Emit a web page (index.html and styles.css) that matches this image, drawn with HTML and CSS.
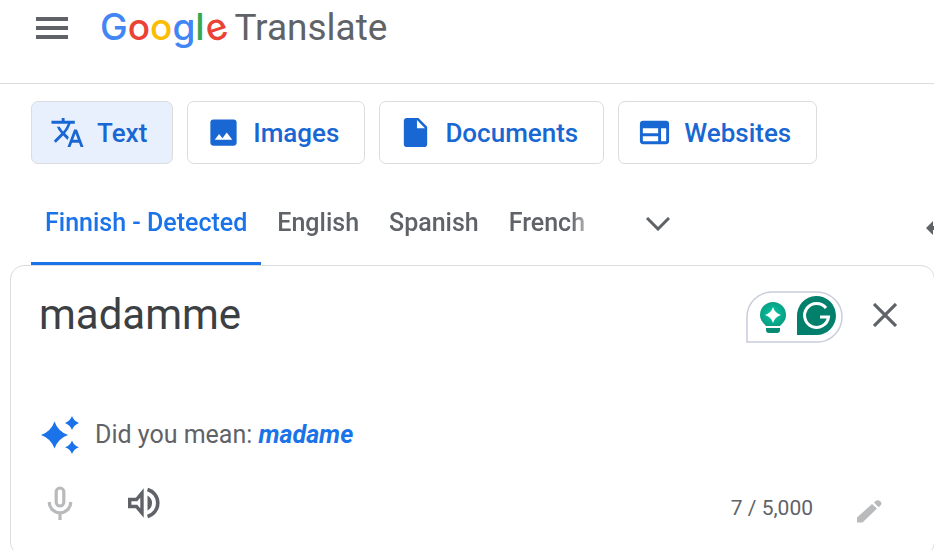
FILE: index.html
```html
<!DOCTYPE html>
<html lang="en">
<head>
<meta charset="utf-8">
<meta name="viewport" content="width=device-width, initial-scale=1">
<title>Google Translate</title>
<link rel="stylesheet" href="styles.css">
</head>
<body>
<header class="topbar">
  <button class="icon-button menu" aria-label="Main menu">
    <svg width="32" height="22" viewBox="0 0 32 22"><path d="M0 0h32v4H0zM0 9h32v4H0zM0 18h32v4H0z"/></svg>
  </button>
  <a class="brand" href="#"><span class="logo"><span class="blue">G</span><span class="red">o</span><span class="yellow">o</span><span class="blue">g</span><span class="green">l</span><span class="red tilt">e</span></span><span class="product">Translate</span></a>
</header>
<main>
  <nav class="modes" aria-label="Translation types">
    <button class="mode active">
      <svg viewBox="0 0 24 24"><path d="M12.87 15.07l-2.54-2.51.03-.03A17.52 17.52 0 0 0 14.07 6H17V4h-7V2H8v2H1v1.99h11.17C11.5 7.92 10.44 9.75 9 11.35 8.07 10.32 7.3 9.19 6.69 8h-2c.73 1.63 1.73 3.17 2.98 4.56l-5.09 5.02L4 19l5-5 3.11 3.11.76-2.04zM18.5 10h-2L12 22h2l1.12-3h4.75L21 22h2l-4.5-12zm-2.62 7l1.62-4.33L19.12 17h-3.24z"/></svg>
      Text
    </button>
    <button class="mode">
      <svg viewBox="0 0 24 24"><path d="M21 19V5c0-1.100-.9-2-2-2H5c-1.100 0-2 .9-2 2v14c0 1.100.9 2 2 2h14c1.100 0 2-.9 2-2zM6 17l3-4 2.250 3 3-4L18 17z"/></svg>
      Images
    </button>
    <button class="mode">
      <svg viewBox="0 0 24 24"><path d="M6 2c-1.100 0-2 .9-2 2v16c0 1.100.9 2 2 2h12c1.100 0 2-.9 2-2V8l-6-6H6zm7 7V3.500L18.500 9H13z"/></svg>
      Documents
    </button>
    <button class="mode">
      <svg viewBox="0 0 24 24"><path fill-rule="evenodd" d="M20 4H4c-1.100 0-2 .9-2 2v12c0 1.100.9 2 2 2h16c1.100 0 2-.9 2-2V6c0-1.100-.9-2-2-2zM4 9h10.500v3.500H4V9zm0 5.500h10.500V18H4v-3.500zM20 18h-3.500V9H20v9z"/></svg>
      Websites
    </button>
  </nav>
  <div class="languages">
    <div class="tabs" role="tablist">
      <button class="tab selected" role="tab" aria-selected="true">Finnish - Detected</button>
      <button class="tab" role="tab">English</button>
      <button class="tab" role="tab">Spanish</button>
      <button class="tab" role="tab">French</button>
    </div>
    <button class="icon-button more" aria-label="More source languages">
      <svg width="24" height="14" viewBox="0 0 24 14"><path d="M1 1l11 11L23 1" fill="none" stroke="currentColor" stroke-width="3"/></svg>
    </button>
    <button class="icon-button swap" aria-label="Swap languages">
      <svg width="32" height="32" viewBox="0 0 32 32"><path d="M0 16l7-7v5h18V9l7 7-7 7v-5H7v5z"/></svg>
    </button>
  </div>
  <section class="card">
    <div class="entry">
      <textarea class="source" aria-label="Source text" rows="1" spellcheck="false">madamme</textarea>
      <button class="assistant" aria-label="Writing assistant">
        <svg width="97" height="52" viewBox="0 0 97 52">
          <defs>
            <radialGradient id="bulb"><stop offset="0" stop-color="#00c9a5"/><stop offset="1" stop-color="#0b9f83"/></radialGradient>
          </defs>
          <path d="M1 51V26A25 25 0 0 1 26 1H71a25 25 0 0 1 0 50z" fill="#fff" stroke="#c9cddd" stroke-width="1.500"/>
          <path d="M27 11a13 13 0 0 0-13 13c0 5 3 8 6 11h14c3-3 6-6 6-11A13 13 0 0 0 27 11z" fill="url(#bulb)"/>
          <path d="M27 16q1.800 6 8 8-6.200 1.800-8 8-1.800-6.200-8-8 6.200-2 8-8z" fill="#fff"/>
          <path d="M20 37h14v2q0 3-3 3h-8q-3 0-3-3z" fill="#078b73"/>
          <path d="M51 44V25.500A19.500 19.500 0 1 1 70.500 44z" fill="#03806b"/>
          <path d="M80 17A12 12 0 1 0 82.500 26H74" fill="none" stroke="#fff" stroke-width="3"/>
        </svg>
      </button>
      <button class="icon-button clear" aria-label="Clear source text">
        <svg width="24" height="24" viewBox="0 0 24 24"><path d="M1 1l22 22M23 1L1 23" fill="none" stroke="currentColor" stroke-width="3.200"/></svg>
      </button>
    </div>
    <div class="suggestion">
      <svg width="38" height="38" viewBox="0 0 38 38"><path d="M13.500 5.500Q17 15.500 27 19 17 22.500 13.500 32.500 10 22.500 0 19 10 15.500 13.500 5.500zM31 0q1.800 5 7 7-5.200 2-7 7-1.800-5-7-7 5.200-2 7-7zM31 24.500q1.800 5 7 6.700-5.200 1.800-7 6.800-1.800-5-7-6.800 5.200-1.700 7-6.700z"/></svg>
      <span>Did you mean: <a href="#">madame</a></span>
    </div>
    <div class="actions">
      <button class="icon-button faded" aria-label="Translate by voice">
        <svg width="26" height="34" viewBox="0 0 26 34"><g fill="none" stroke="currentColor" stroke-width="3.200"><rect x="9.200" y="2" width="7.600" height="18" rx="3.800"/><path d="M2.200 16a10.800 10.800 0 0 0 21.600 0M13 27v7"/></g></svg>
      </button>
      <button class="icon-button" aria-label="Listen to source text">
        <svg width="32" height="32" viewBox="0 0 32 32"><path d="M14 6v20l-5.500-6.500H1.700v-7h6.800z" fill="none" stroke="currentColor" stroke-width="3.400"/><path d="M19.500 8.500Q24 11 24 16t-4.500 7.500z"/><path d="M19.500 2.500a14 14 0 0 1 0 27" fill="none" stroke="currentColor" stroke-width="3.600"/></svg>
      </button>
      <div class="tools">
        <span class="count">7 / 5,000</span>
        <button class="icon-button faded" aria-label="Handwriting">
          <svg width="25" height="23" viewBox="0 0 25 23"><path d="M0 17.500L15 4l5 4.500L5.500 22.500H0zM17 2.500q3-3.500 6-1.500 3 2.500 0 5l-1.500 1.300z"/></svg>
        </button>
      </div>
    </div>
  </section>
</main>
</body>
</html>
```
FILE: styles.css
```css
* { box-sizing: border-box; }

body {
  margin: 0;
  overflow: hidden;
  background: #fff;
  color: #5f6368;
  font-family: Roboto, "Liberation Sans", sans-serif;
}

button {
  margin: 0;
  padding: 0;
  border: 0;
  background: none;
  color: inherit;
  font: inherit;
  cursor: pointer;
}

svg {
  display: block;
  flex: none;
  fill: currentColor;
}

a { text-decoration: none; }

.icon-button {
  display: flex;
  flex: none;
}

.topbar {
  display: flex;
  align-items: center;
  gap: 32px;
  height: 84px;
  padding: 0 36px 28px;
  border-bottom: 1px solid #dadce0;
}

.brand {
  display: flex;
  align-items: baseline;
  gap: 8px;
  color: #5f6368;
  font-size: 37px;
  line-height: 50px;
}

.logo {
  font-family: Inter, sans-serif;
  font-weight: 500;
}

.blue { color: #4285f4; }
.red { color: #ea4335; }
.yellow { color: #fbbc04; }
.green { color: #34a853; }

.tilt {
  display: inline-block;
  transform: rotate(-18deg);
}

.modes {
  display: flex;
  gap: 14px;
  padding: 17px 31px 0;
}

.mode {
  display: flex;
  align-items: center;
  gap: 12px;
  height: 63px;
  padding: 0 25px 0 18px;
  border: 1px solid #dadce0;
  border-radius: 7px;
  color: #1967d2;
  font-size: 26px;
  font-weight: 500;
}

.mode svg {
  width: 35px;
  height: 35px;
}

.active { background: #e8f0fe; }

.languages {
  display: flex;
  align-items: center;
  height: 101px;
  padding-left: 31px;
}

.tabs {
  display: flex;
  align-self: stretch;
  gap: 2px;
  mask-image: linear-gradient(to right, #000 calc(100% - 28px), transparent);
}

.tab {
  padding: 18px 14px 3px;
  font-size: 25px;
  font-weight: 500;
  white-space: nowrap;
}

.selected {
  padding-bottom: 0;
  border-bottom: 3px solid #1a73e8;
  color: #1a73e8;
}

.more {
  margin-left: 47px;
  padding-top: 18px;
}

.swap {
  margin-right: -24px;
  margin-left: auto;
  padding-top: 26px;
}

.card {
  margin: 0 -1px 0 10px;
  padding: 21px 37px 32px 28px;
  border: 1px solid #dadce0;
  border-radius: 14px;
}

.entry {
  display: flex;
  align-items: flex-start;
  gap: 30px;
  height: 128px;
}

.source {
  flex: 1;
  min-width: 0;
  padding: 0;
  border: 0;
  outline: 0;
  background: none;
  color: #3c4043;
  font: 42px/56px Roboto, sans-serif;
  resize: none;
  overflow: hidden;
}

.assistant { margin-top: 4px; }

.clear { margin-top: 16px; }

.suggestion {
  display: flex;
  align-items: center;
  gap: 16px;
  padding-left: 2px;
  font-size: 25px;
  line-height: 40px;
}

.suggestion svg { color: #1a73e8; }

.suggestion a {
  color: #1a73e8;
  font-style: italic;
  font-weight: 700;
}

.actions {
  display: flex;
  align-items: center;
  gap: 55px;
  margin-top: 28px;
  padding: 0 15px 0 8px;
}

.tools {
  display: flex;
  align-items: flex-end;
  gap: 44px;
  margin-left: auto;
  padding-top: 10px;
}

.faded { color: #b9babc; }

.count {
  font-size: 21px;
  line-height: 30px;
}
```
